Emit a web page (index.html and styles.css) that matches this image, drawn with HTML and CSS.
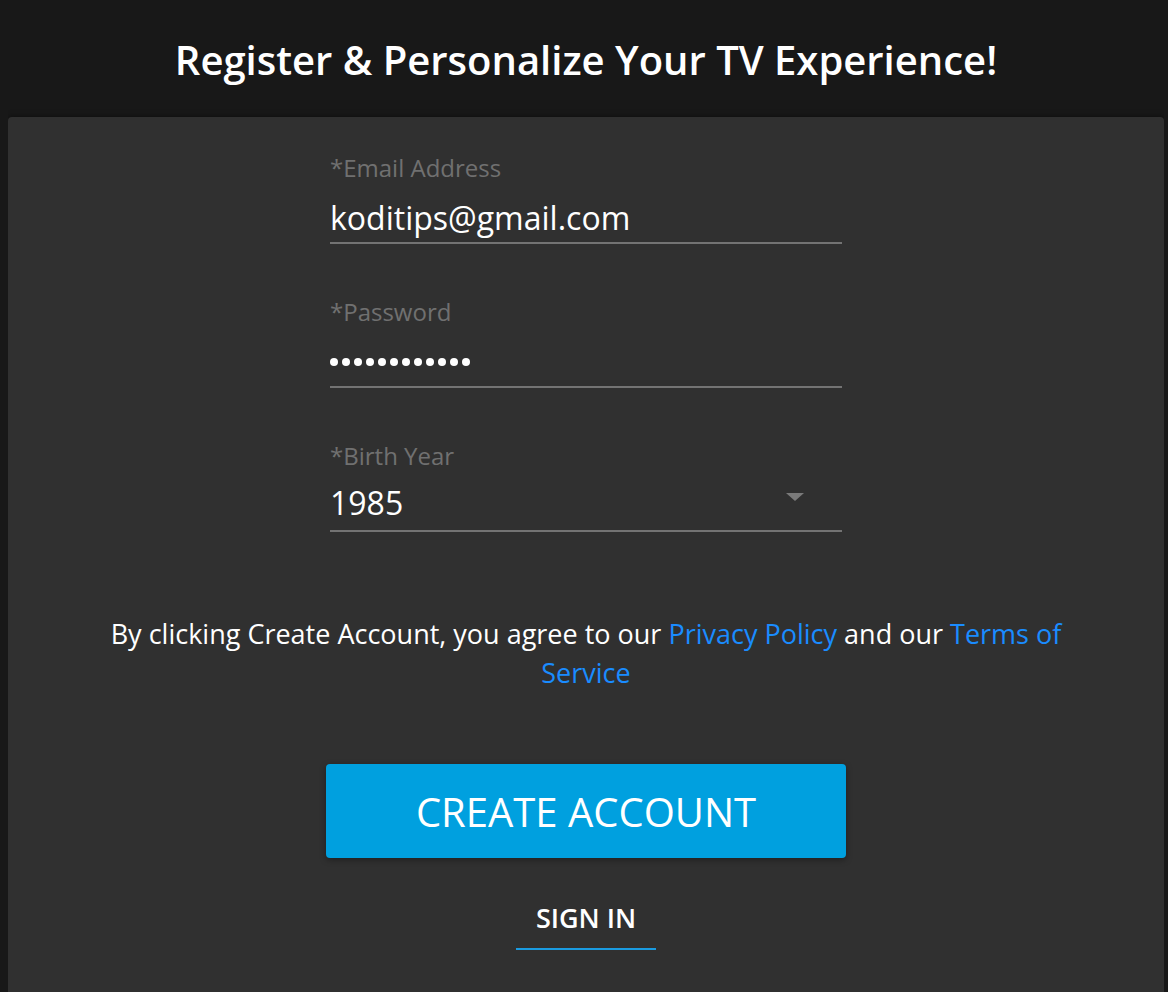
FILE: index.html
```html
<!DOCTYPE html>
<html lang="en">
  <head>
    <meta charset="UTF-8" />
    <meta name="viewport" content="width=device-width, initial-scale=1.0" />
    <title>Register</title>
    <link rel="stylesheet" href="styles.css">
  </head>
  <body>
    <h1 class="page-title">Register &amp; Personalize Your TV Experience!</h1>

    <div class="card">
      <form class="register-form">
        <div class="field">
          <label for="email">*Email Address</label>
          <div class="field-value">koditips@gmail.com</div>
        </div>
        <div class="field">
          <label for="password">*Password</label>
          <div class="field-value dots">
            <span></span><span></span><span></span><span></span>
            <span></span><span></span><span></span><span></span>
            <span></span><span></span><span></span><span></span>
          </div>
        </div>
        <div class="field">
          <label for="birth_year">*Birth Year</label>
          <div class="field-value select">
            <span class="year">1985</span>
            <span class="caret"></span>
          </div>
        </div>
      </form>

      <p class="terms">
        By clicking Create Account, you agree to our <a href="#">Privacy Policy</a> and our <a href="#">Terms of Service</a>
      </p>

      <button class="create-btn">CREATE ACCOUNT</button>

      <a href="#" class="sign-in">SIGN IN</a>
    </div>
  </body>
</html>
```

FILE: styles.css
```css
* {
  margin: 0;
  padding: 0;
  box-sizing: border-box;
  font-family: "Open Sans", "Noto Sans", sans-serif;
}

body {
  background-color: #181818;
  color: #fff;
  margin: 0 4px 0 8px;
}

.page-title {
  text-align: center;
  font-size: 40px;
  font-weight: 600;
  line-height: 52px;
  padding-top: 34px;
  height: 117px;
}

.card {
  background: #303030;
  border-radius: 4px;
  box-shadow: 0 0 6px rgba(0, 0, 0, 0.5);
  min-height: 880px;
  display: flex;
  flex-direction: column;
  align-items: center;
  padding-top: 35px;
}

.register-form {
  width: 512px;
  display: flex;
  flex-direction: column;
  gap: 52px;
}

.field label {
  display: block;
  color: #707070;
  font-size: 24px;
  font-weight: 400;
  line-height: 32px;
}

.field-value {
  font-size: 32px;
  line-height: 44px;
  padding: 12px 0 2px;
  border-bottom: 2px solid #737373;
  height: 60px;
  display: flex;
  align-items: center;
}

.dots {
  gap: 4px;
}

.dots span {
  width: 8px;
  height: 8px;
  border-radius: 50%;
  background: #fff;
}

.select {
  justify-content: space-between;
}

.year {
  margin-top: -6px;
}

.caret {
  width: 0;
  height: 0;
  border-left: 9px solid transparent;
  border-right: 9px solid transparent;
  border-top: 8px solid #7a7a7a;
  margin-right: 38px;
  margin-top: -18px;
}

.terms {
  margin-top: 82px;
  width: 980px;
  text-align: center;
  font-size: 27px;
  line-height: 39px;
}

.terms a {
  color: #1a8cff;
  text-decoration: none;
}

.create-btn {
  margin-top: 72px;
  width: 520px;
  height: 94px;
  background-color: #00a0df;
  color: #fff;
  border: none;
  border-radius: 4px;
  font-size: 40px;
  box-shadow: 0 2px 6px rgba(0, 0, 0, 0.35);
  cursor: pointer;
}

.sign-in {
  margin-top: 42px;
  width: 140px;
  text-align: center;
  color: #fff;
  text-decoration: none;
  font-size: 27px;
  font-weight: 600;
  line-height: 36px;
  padding-bottom: 12px;
  border-bottom: 2px solid #1a9be0;
}
```
